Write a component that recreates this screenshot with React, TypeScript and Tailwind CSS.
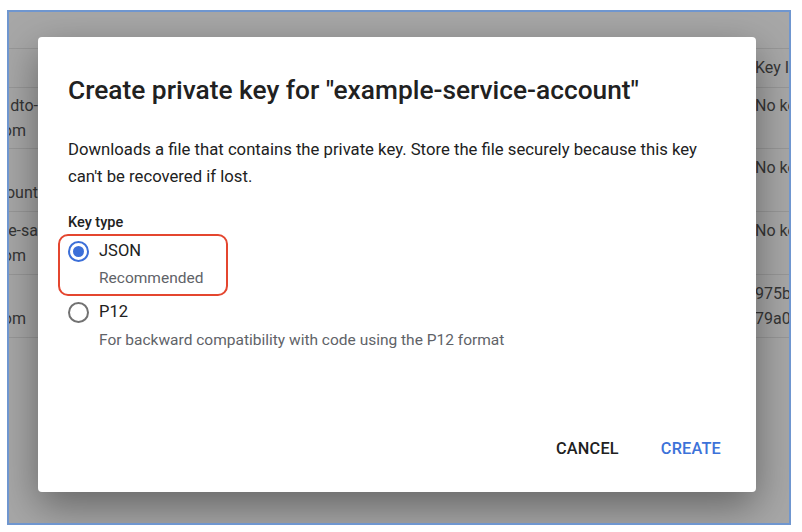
const rows = [
  { left: ["sa-load dto-", "example.com"], pads: ["", "pr-[12px]"], right: ["No keys", ""], h: "h-[61px]" },
  { left: ["", "test-account"], pads: ["", ""], right: ["No keys", ""], h: "h-[63px]" },
  { left: ["example-sa", "example.com"], pads: ["", "pr-[12px]"], right: ["No keys", ""], h: "h-[63px]" },
  { left: ["", "app.example.com"], pads: ["", "pr-[12px]"], right: ["975bd1", "79a0c2"], h: "h-[63px]" },
];

function Radio({ checked }: { checked: boolean }) {
  return checked ? (
    <span className="flex h-[21px] w-[21px] shrink-0 items-center justify-center rounded-full border-2 border-[#3c6fd8]">
      <span className="h-[11px] w-[11px] rounded-full bg-[#3c6fd8]" />
    </span>
  ) : (
    <span className="h-[21px] w-[21px] shrink-0 rounded-full border-2 border-[#727272]" />
  );
}

export default function App() {
  return (
    <div
      className="h-[532px] w-[802px] bg-white pl-[7px] pt-[10px]"
      style={{ fontFamily: "Roboto, 'Liberation Sans', sans-serif" }}
    >
      <div className="relative h-[515px] w-[784px] overflow-hidden border-2 border-[#6f96cf] bg-[#a7a7a7] text-[16px] text-[#353535]">
        {/* table behind the scrim */}
        <div className="h-[37px] border-b border-[#979797]" />
        <div className="flex h-[39px] items-center border-b border-[#979797]">
          <div className="flex-1" />
          <div className="w-[34px] overflow-hidden whitespace-nowrap">Key ID</div>
        </div>
        {rows.map((r, i) => (
          <div key={i} className={`flex items-center border-b border-[#979797] ${r.h}`}>
            <div className="flex w-[29px] flex-col items-end overflow-hidden whitespace-pre leading-[25px]">
              {r.left.map((t, j) => (
                <span key={j} className={`h-[25px] ${r.pads[j]}`}>
                  {t}
                </span>
              ))}
            </div>
            <div className="flex-1" />
            <div className="flex w-[34px] flex-col overflow-hidden whitespace-nowrap leading-[25px]">
              {r.right.map((t, j) => (
                <span key={j} className="h-[25px]">
                  {t}
                </span>
              ))}
            </div>
          </div>
        ))}

        {/* dialog */}
        <div className="absolute left-[29px] top-[25px] flex h-[455px] w-[718px] flex-col rounded-[4px] bg-white px-[30px] pt-[37px] pb-[33px] shadow-[0_14px_40px_rgba(0,0,0,0.4)]">
          <h1 className="text-[26.3px] leading-[32px] font-medium text-[#212121]">
            Create private key for "example-service-account"
          </h1>
          <p className="mt-[30px] text-[16.7px] leading-[27px] text-[#212121]">
            Downloads a file that contains the private key. Store the file securely because this key
            can't be recovered if lost.
          </p>
          <div className="mt-[24px] text-[14.5px] font-medium leading-[18px] text-[#212121]">Key type</div>
          <div className="relative mt-[6px] flex flex-col">
            <div className="pointer-events-none absolute left-[-10px] top-[-4px] h-[62px] w-[170px] rounded-[10px] border-2 border-[#e4462f]" />
            <div className="flex h-[26px] items-center gap-[10px]">
              <Radio checked />
              <span className="text-[16.5px] text-[#212121]">JSON</span>
            </div>
            <div className="pl-[31px] pt-[1px] text-[15.5px] leading-[26px] text-[#5f6368]">Recommended</div>
            <div className="mt-[8px] flex h-[26px] items-center gap-[10px]">
              <Radio checked={false} />
              <span className="text-[16.5px] text-[#212121]">P12</span>
            </div>
            <div className="pl-[31px] pt-[2px] text-[15.5px] leading-[26px] text-[#5f6368]">
              For backward compatibility with code using the P12 format
            </div>
          </div>
          <div className="mt-auto flex justify-end gap-[42px] pr-[5px]">
            <button className="text-[16.3px] font-medium leading-[20px] tracking-[0.2px] text-[#212121]">CANCEL</button>
            <button className="text-[16.3px] font-medium leading-[20px] tracking-[0.2px] text-[#3c72d9]">CREATE</button>
          </div>
        </div>
      </div>
    </div>
  );
}
